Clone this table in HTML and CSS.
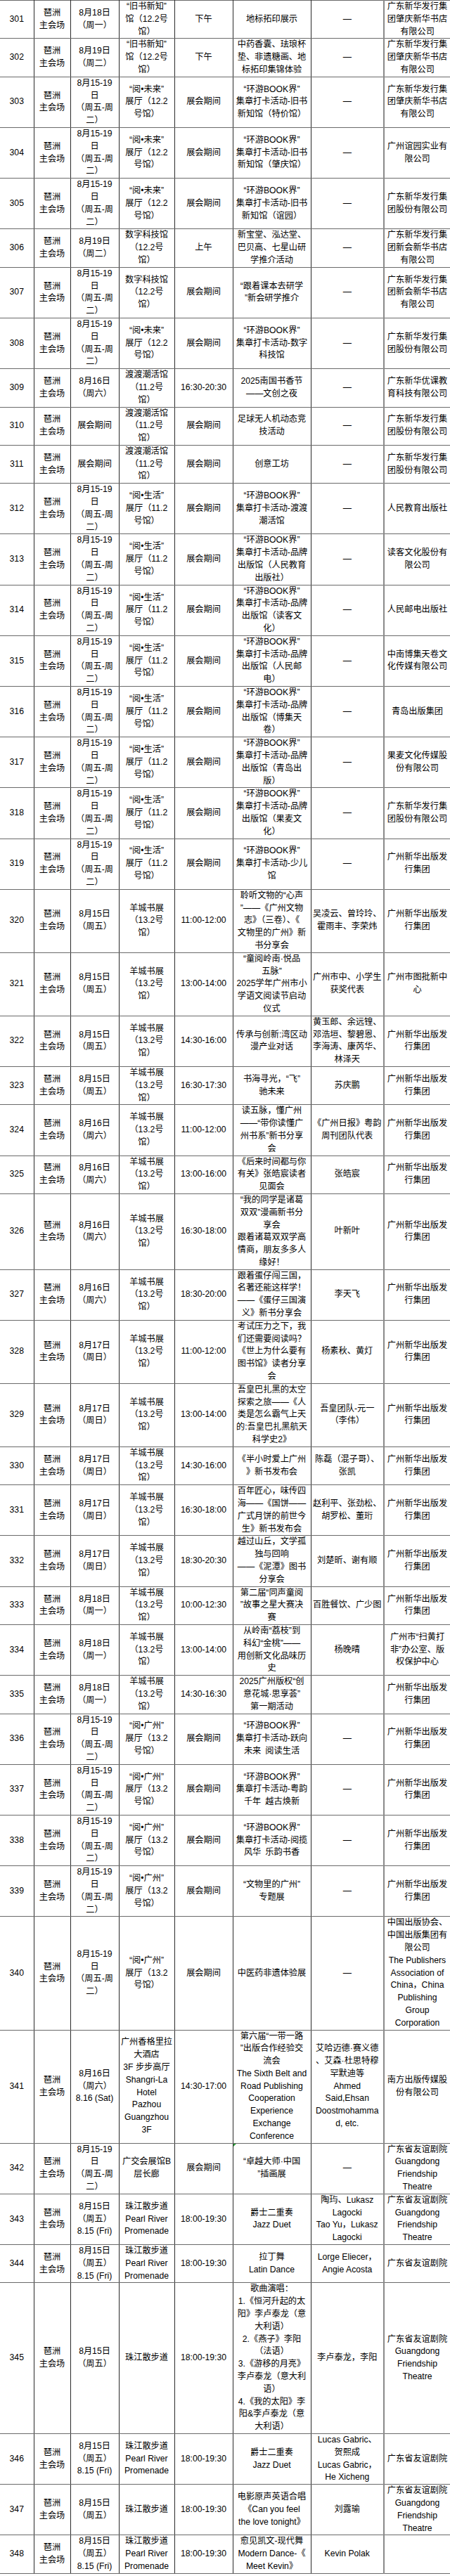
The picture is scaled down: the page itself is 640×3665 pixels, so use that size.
FILE: index.html
```html
<!DOCTYPE html>
<html lang="zh-CN">
<head>
<meta charset="utf-8">
<title>活动安排</title>
<link rel="stylesheet" href="styles.css">
</head>
<body>
<table class="sched">
<colgroup>
<col class="c-no"><col class="c-site"><col class="c-date"><col class="c-venue"><col class="c-time"><col class="c-event"><col class="c-guest"><col class="c-org">
</colgroup>
<tbody>
<tr><td>301</td><td>琶洲<br>主会场</td><td>8月18日<br>（周一）</td><td>“旧书新知”<br>馆（12.2号<br>馆）</td><td>下午</td><td>地标拓印展示</td><td>—</td><td>广东新华发行集<br>团肇庆新华书店<br>有限公司</td></tr>
<tr><td>302</td><td>琶洲<br>主会场</td><td>8月19日<br>（周二）</td><td>“旧书新知”<br>馆（12.2号<br>馆）</td><td>下午</td><td>中药香囊、珐琅杯<br>垫、非遗糖画、地<br>标拓印集锦体验</td><td>—</td><td>广东新华发行集<br>团肇庆新华书店<br>有限公司</td></tr>
<tr><td>303</td><td>琶洲<br>主会场</td><td>8月15-19<br>日<br>（周五-周<br>二）</td><td>“阅•未来”<br>展厅（12.2<br>号馆）</td><td>展会期间</td><td>“环游BOOK界”<br>集章打卡活动-旧书<br>新知馆（特价馆）</td><td>—</td><td>广东新华发行集<br>团肇庆新华书店<br>有限公司</td></tr>
<tr><td>304</td><td>琶洲<br>主会场</td><td>8月15-19<br>日<br>（周五-周<br>二）</td><td>“阅•未来”<br>展厅（12.2<br>号馆）</td><td>展会期间</td><td>“环游BOOK界”<br>集章打卡活动-旧书<br>新知馆（肇庆馆）</td><td>—</td><td>广州谊园实业有<br>限公司</td></tr>
<tr><td>305</td><td>琶洲<br>主会场</td><td>8月15-19<br>日<br>（周五-周<br>二）</td><td>“阅•未来”<br>展厅（12.2<br>号馆）</td><td>展会期间</td><td>“环游BOOK界”<br>集章打卡活动-旧书<br>新知馆（谊园）</td><td>—</td><td>广东新华发行集<br>团股份有限公司</td></tr>
<tr><td>306</td><td>琶洲<br>主会场</td><td>8月19日<br>（周二）</td><td>数字科技馆<br>（12.2号<br>馆）</td><td>上午</td><td>新宝堂、泓达堂、<br>巴贝高、七星山研<br>学推介活动</td><td>—</td><td>广东新华发行集<br>团新会新华书店<br>有限公司</td></tr>
<tr><td>307</td><td>琶洲<br>主会场</td><td>8月15-19<br>日<br>（周五-周<br>二）</td><td>数字科技馆<br>（12.2号<br>馆）</td><td>展会期间</td><td>“跟着课本去研学<br>”新会研学推介</td><td>—</td><td>广东新华发行集<br>团新会新华书店<br>有限公司</td></tr>
<tr><td>308</td><td>琶洲<br>主会场</td><td>8月15-19<br>日<br>（周五-周<br>二）</td><td>“阅•未来”<br>展厅（12.2<br>号馆）</td><td>展会期间</td><td>“环游BOOK界”<br>集章打卡活动-数字<br>科技馆</td><td>—</td><td>广东新华发行集<br>团股份有限公司</td></tr>
<tr><td>309</td><td>琶洲<br>主会场</td><td>8月16日<br>（周六）</td><td>渡渡潮活馆<br>（11.2号<br>馆）</td><td>16:30-20:30</td><td>2025南国书香节<br>——文创之夜</td><td>—</td><td>广东新华优课教<br>育科技有限公司</td></tr>
<tr><td>310</td><td>琶洲<br>主会场</td><td>展会期间</td><td>渡渡潮活馆<br>（11.2号<br>馆）</td><td>展会期间</td><td>足球无人机动态竞<br>技活动</td><td>—</td><td>广东新华发行集<br>团股份有限公司</td></tr>
<tr><td>311</td><td>琶洲<br>主会场</td><td>展会期间</td><td>渡渡潮活馆<br>（11.2号<br>馆）</td><td>展会期间</td><td>创意工坊</td><td>—</td><td>广东新华发行集<br>团股份有限公司</td></tr>
<tr><td>312</td><td>琶洲<br>主会场</td><td>8月15-19<br>日<br>（周五-周<br>二）</td><td>“阅•生活”<br>展厅（11.2<br>号馆）</td><td>展会期间</td><td>“环游BOOK界”<br>集章打卡活动-渡渡<br>潮活馆</td><td>—</td><td>人民教育出版社</td></tr>
<tr><td>313</td><td>琶洲<br>主会场</td><td>8月15-19<br>日<br>（周五-周<br>二）</td><td>“阅•生活”<br>展厅（11.2<br>号馆）</td><td>展会期间</td><td>“环游BOOK界”<br>集章打卡活动-品牌<br>出版馆（人民教育<br>出版社）</td><td>—</td><td>读客文化股份有<br>限公司</td></tr>
<tr><td>314</td><td>琶洲<br>主会场</td><td>8月15-19<br>日<br>（周五-周<br>二）</td><td>“阅•生活”<br>展厅（11.2<br>号馆）</td><td>展会期间</td><td>“环游BOOK界”<br>集章打卡活动-品牌<br>出版馆（读客文<br>化）</td><td>—</td><td>人民邮电出版社</td></tr>
<tr><td>315</td><td>琶洲<br>主会场</td><td>8月15-19<br>日<br>（周五-周<br>二）</td><td>“阅•生活”<br>展厅（11.2<br>号馆）</td><td>展会期间</td><td>“环游BOOK界”<br>集章打卡活动-品牌<br>出版馆（人民邮<br>电）</td><td>—</td><td>中南博集天卷文<br>化传媒有限公司</td></tr>
<tr><td>316</td><td>琶洲<br>主会场</td><td>8月15-19<br>日<br>（周五-周<br>二）</td><td>“阅•生活”<br>展厅（11.2<br>号馆）</td><td>展会期间</td><td>“环游BOOK界”<br>集章打卡活动-品牌<br>出版馆（博集天<br>卷）</td><td>—</td><td>青岛出版集团</td></tr>
<tr><td>317</td><td>琶洲<br>主会场</td><td>8月15-19<br>日<br>（周五-周<br>二）</td><td>“阅•生活”<br>展厅（11.2<br>号馆）</td><td>展会期间</td><td>“环游BOOK界”<br>集章打卡活动-品牌<br>出版馆（青岛出<br>版）</td><td>—</td><td>果麦文化传媒股<br>份有限公司</td></tr>
<tr><td>318</td><td>琶洲<br>主会场</td><td>8月15-19<br>日<br>（周五-周<br>二）</td><td>“阅•生活”<br>展厅（11.2<br>号馆）</td><td>展会期间</td><td>“环游BOOK界”<br>集章打卡活动-品牌<br>出版馆（果麦文<br>化）</td><td>—</td><td>广东新华发行集<br>团股份有限公司</td></tr>
<tr><td>319</td><td>琶洲<br>主会场</td><td>8月15-19<br>日<br>（周五-周<br>二）</td><td>“阅•生活”<br>展厅（11.2<br>号馆）</td><td>展会期间</td><td>“环游BOOK界”<br>集章打卡活动-少儿<br>馆</td><td>—</td><td>广州新华出版发<br>行集团</td></tr>
<tr><td>320</td><td>琶洲<br>主会场</td><td>8月15日<br>（周五）</td><td>羊城书展<br>（13.2号<br>馆）</td><td>11:00-12:00</td><td>聆听文物的“心声<br>”——《广州文物<br>志》（三卷）、《<br>文物里的广州》新<br>书分享会</td><td>吴凌云、曾玲玲、<br>霍雨丰、李荣炜</td><td>广州新华出版发<br>行集团</td></tr>
<tr><td>321</td><td>琶洲<br>主会场</td><td>8月15日<br>（周五）</td><td>羊城书展<br>（13.2号<br>馆）</td><td>13:00-14:00</td><td>“童阅岭南·悦品<br>五脉”<br>2025学年广州市小<br>学语文阅读节启动<br>仪式</td><td>广州市中、小学生<br>获奖代表</td><td>广州市图批新中<br>心</td></tr>
<tr><td>322</td><td>琶洲<br>主会场</td><td>8月15日<br>（周五）</td><td>羊城书展<br>（13.2号<br>馆）</td><td>14:30-16:00</td><td>传承与创新:湾区动<br>漫产业对话</td><td>黄玉郎、余远锽、<br>邓浩垣、黎碧恩、<br>李海涛、康芮华、<br>林泽天</td><td>广州新华出版发<br>行集团</td></tr>
<tr><td>323</td><td>琶洲<br>主会场</td><td>8月15日<br>（周五）</td><td>羊城书展<br>（13.2号<br>馆）</td><td>16:30-17:30</td><td>书海寻光，“飞”<br>驰未来</td><td>苏庆鹏</td><td>广州新华出版发<br>行集团</td></tr>
<tr><td>324</td><td>琶洲<br>主会场</td><td>8月16日<br>（周六）</td><td>羊城书展<br>（13.2号<br>馆）</td><td>11:00-12:00</td><td>读五脉，懂广州<br>——“带你读懂广<br>州书系”新书分享<br>会</td><td>《广州日报》粤韵<br>周刊团队代表</td><td>广州新华出版发<br>行集团</td></tr>
<tr><td>325</td><td>琶洲<br>主会场</td><td>8月16日<br>（周六）</td><td>羊城书展<br>（13.2号<br>馆）</td><td>13:00-16:00</td><td>《后来时间都与你<br>有关》张皓宸读者<br>见面会</td><td>张皓宸</td><td>广州新华出版发<br>行集团</td></tr>
<tr><td>326</td><td>琶洲<br>主会场</td><td>8月16日<br>（周六）</td><td>羊城书展<br>（13.2号<br>馆）</td><td>16:30-18:00</td><td>“我的同学是诸葛<br>双双”漫画新书分<br>享会<br>跟着诸葛双双学高<br>情商，朋友多多人<br>缘好！</td><td>叶新叶</td><td>广州新华出版发<br>行集团</td></tr>
<tr><td>327</td><td>琶洲<br>主会场</td><td>8月16日<br>（周六）</td><td>羊城书展<br>（13.2号<br>馆）</td><td>18:30-20:00</td><td>跟着蛋仔闯三国，<br>名著还能这样学！<br>——《蛋仔三国演<br>义》新书分享会</td><td>李天飞</td><td>广州新华出版发<br>行集团</td></tr>
<tr><td>328</td><td>琶洲<br>主会场</td><td>8月17日<br>（周日）</td><td>羊城书展<br>（13.2号<br>馆）</td><td>11:00-12:00</td><td>考试压力之下，我<br>们还需要阅读吗？<br>《世上为什么要有<br>图书馆》读者分享<br>会</td><td>杨素秋、黄灯</td><td>广州新华出版发<br>行集团</td></tr>
<tr><td>329</td><td>琶洲<br>主会场</td><td>8月17日<br>（周日）</td><td>羊城书展<br>（13.2号<br>馆）</td><td>13:00-14:00</td><td>吾皇巴扎黑的太空<br>探索之旅——《人<br>类是怎么霸气上天<br>的:吾皇巴扎黑航天<br>科学史2》</td><td>吾皇团队-元一<br>（李伟）</td><td>广州新华出版发<br>行集团</td></tr>
<tr><td>330</td><td>琶洲<br>主会场</td><td>8月17日<br>（周日）</td><td>羊城书展<br>（13.2号<br>馆）</td><td>14:30-16:00</td><td>《半小时爱上广州<br>》新书发布会</td><td>陈磊（混子哥）、<br>张凯</td><td>广州新华出版发<br>行集团</td></tr>
<tr><td>331</td><td>琶洲<br>主会场</td><td>8月17日<br>（周日）</td><td>羊城书展<br>（13.2号<br>馆）</td><td>16:30-18:00</td><td>百年匠心，味传四<br>海——《国饼——<br>广式月饼的前世今<br>生》新书发布会</td><td>赵利平、张劲松、<br>胡罗松、董珩</td><td>广州新华出版发<br>行集团</td></tr>
<tr><td>332</td><td>琶洲<br>主会场</td><td>8月17日<br>（周日）</td><td>羊城书展<br>（13.2号<br>馆）</td><td>18:30-20:30</td><td>越过山丘，文学孤<br>独与回响<br>——《泥潭》图书<br>分享会</td><td>刘楚昕、谢有顺</td><td>广州新华出版发<br>行集团</td></tr>
<tr><td>333</td><td>琶洲<br>主会场</td><td>8月18日<br>（周一）</td><td>羊城书展<br>（13.2号<br>馆）</td><td>10:00-12:30</td><td>第二届“同声童阅<br>”故事之星大赛决<br>赛</td><td>百胜餐饮、广少图</td><td>广州新华出版发<br>行集团</td></tr>
<tr><td>334</td><td>琶洲<br>主会场</td><td>8月18日<br>（周一）</td><td>羊城书展<br>（13.2号<br>馆）</td><td>13:00-14:00</td><td>从岭南“荔枝”到<br>科幻“金桃”——<br>用创新文化品味历<br>史</td><td>杨晚晴</td><td>广州市“扫黄打<br>非”办公室、版<br>权保护中心</td></tr>
<tr><td>335</td><td>琶洲<br>主会场</td><td>8月18日<br>（周一）</td><td>羊城书展<br>（13.2号<br>馆）</td><td>14:30-16:30</td><td>2025广州版权“创<br>意花城·思享荟”<br>第一期活动</td><td></td><td>广州新华出版发<br>行集团</td></tr>
<tr><td>336</td><td>琶洲<br>主会场</td><td>8月15-19<br>日<br>（周五-周<br>二）</td><td>“阅•广州”<br>展厅（13.2<br>号馆）</td><td>展会期间</td><td>“环游BOOK界”<br>集章打卡活动-跃向<br>未来&ensp;阅读生活</td><td>—</td><td>广州新华出版发<br>行集团</td></tr>
<tr><td>337</td><td>琶洲<br>主会场</td><td>8月15-19<br>日<br>（周五-周<br>二）</td><td>“阅•广州”<br>展厅（13.2<br>号馆）</td><td>展会期间</td><td>“环游BOOK界”<br>集章打卡活动-粤韵<br>千年&ensp;越古焕新</td><td>—</td><td>广州新华出版发<br>行集团</td></tr>
<tr><td>338</td><td>琶洲<br>主会场</td><td>8月15-19<br>日<br>（周五-周<br>二）</td><td>“阅•广州”<br>展厅（13.2<br>号馆）</td><td>展会期间</td><td>“环游BOOK界”<br>集章打卡活动-阅揽<br>风华&ensp;乐韵书香</td><td>—</td><td>广州新华出版发<br>行集团</td></tr>
<tr><td>339</td><td>琶洲<br>主会场</td><td>8月15-19<br>日<br>（周五-周<br>二）</td><td>“阅•广州”<br>展厅（13.2<br>号馆）</td><td>展会期间</td><td>“文物里的广州”<br>专题展</td><td>—</td><td>广州新华出版发<br>行集团</td></tr>
<tr><td>340</td><td>琶洲<br>主会场</td><td>8月15-19<br>日<br>（周五-周<br>二）</td><td>“阅•广州”<br>展厅（13.2<br>号馆）</td><td>展会期间</td><td>中医药非遗体验展</td><td>—</td><td>中国出版协会、<br>中国出版集团有<br>限公司<br>The Publishers<br>Association of<br>China，China<br>Publishing<br>Group<br>Corporation</td></tr>
<tr><td>341</td><td>琶洲<br>主会场</td><td>8月16日<br>（周六）<br>8.16 (Sat)</td><td>广州香格里拉<br>大酒店<br>3F 步步高厅<br>Shangri-La<br>Hotel<br>Pazhou<br>Guangzhou<br>3F</td><td>14:30-17:00</td><td>第六届“一带一路<br>”出版合作经验交<br>流会<br>The Sixth Belt and<br>Road Publishing<br>Cooperation<br>Experience<br>Exchange<br>Conference</td><td>艾哈迈德·赛义德<br>、艾森·杜思特穆<br>罕默迪等<br>Ahmed<br>Said,Ehsan<br>Doostmohamma<br>d, etc.</td><td>南方出版传媒股<br>份有限公司</td></tr>
<tr><td>342</td><td>琶洲<br>主会场</td><td>8月15-19<br>日<br>（周五-周<br>二）</td><td>广交会展馆B<br>层长廊</td><td>展会期间</td><td class="noted">“卓越大师·中国<br>”插画展</td><td>—</td><td>广东省友谊剧院<br>Guangdong<br>Friendship<br>Theatre</td></tr>
<tr><td>343</td><td>琶洲<br>主会场</td><td>8月15日<br>（周五）<br>8.15 (Fri)</td><td>珠江散步道<br>Pearl River<br>Promenade</td><td>18:00-19:30</td><td>爵士二重奏<br>Jazz Duet</td><td>陶玙、Lukasz<br>Lagocki<br>Tao Yu，Lukasz<br>Lagocki</td><td>广东省友谊剧院<br>Guangdong<br>Friendship<br>Theatre</td></tr>
<tr><td>344</td><td>琶洲<br>主会场</td><td>8月15日<br>（周五）<br>8.15 (Fri)</td><td>珠江散步道<br>Pearl River<br>Promenade</td><td>18:00-19:30</td><td>拉丁舞<br>Latin Dance</td><td>Lorge Eliecer，<br>Angie Acosta</td><td>广东省友谊剧院</td></tr>
<tr><td>345</td><td>琶洲<br>主会场</td><td>8月15日<br>（周五）</td><td>珠江散步道</td><td>18:00-19:30</td><td>歌曲演唱：<br>1.《恒河升起的太<br>阳》李卢泰龙（意<br>大利语）<br>2.《燕子》李阳<br>（法语）<br>3.《游移的月亮》<br>李卢泰龙（意大利<br>语）<br>4.《我的太阳》李<br>阳&amp;李卢泰龙（意<br>大利语）</td><td>李卢泰龙，李阳</td><td>广东省友谊剧院<br>Guangdong<br>Friendship<br>Theatre</td></tr>
<tr><td>346</td><td>琶洲<br>主会场</td><td>8月15日<br>（周五）<br>8.15 (Fri)</td><td>珠江散步道<br>Pearl River<br>Promenade</td><td>18:00-19:30</td><td>爵士二重奏<br>Jazz Duet</td><td>Lucas Gabric、<br>贺熙成<br>Lucas Gabric，<br>He Xicheng</td><td>广东省友谊剧院</td></tr>
<tr><td>347</td><td>琶洲<br>主会场</td><td>8月15日<br>（周五）</td><td>珠江散步道</td><td>18:00-19:30</td><td>电影原声英语合唱<br>《Can you feel<br>the love tonight》</td><td>刘露瑜</td><td>广东省友谊剧院<br>Guangdong<br>Friendship<br>Theatre</td></tr>
<tr><td>348</td><td>琶洲<br>主会场</td><td>8月15日<br>（周五）<br>8.15 (Fri)</td><td>珠江散步道<br>Pearl River<br>Promenade</td><td>18:00-19:30</td><td>愈见凯文-现代舞<br>Modern Dance-《<br>Meet Kevin》</td><td>Kevin Polak</td><td></td></tr>
</tbody>
</table>
</body>
</html>
```

FILE: styles.css
```css
html, body {
  margin: 0;
  padding: 0;
  background: #ffffff;
}

.sched {
  width: 640px;
  border-collapse: collapse;
  table-layout: fixed;
  font-family: "Liberation Sans", "Noto Sans CJK SC", sans-serif;
  font-size: 12.2px;
  line-height: 17.8px;
  color: #000000;
}

.c-no { width: 48px; }
.c-site { width: 52px; }
.c-date { width: 69px; }
.c-venue { width: 79px; }
.c-time { width: 83px; }
.c-event { width: 111px; }
.c-guest { width: 104px; }
.c-org { width: 94px; }

.sched td {
  border-top: 1px solid #6a6a6a;
  border-bottom: 1px solid #6a6a6a;
  border-left: 1px solid #2a2a2a;
  border-right: 1px solid #2a2a2a;
  padding: 0 1px;
  text-align: center;
  vertical-align: middle;
  white-space: nowrap;
  overflow: visible;
}

.sched td:first-child {
  border-left: none;
}

.sched td:last-child {
  border-right: none;
}

.sched td:nth-child(8) {
  border-left: 2px solid #8a8a8a;
}

.sched td.noted {
  position: relative;
}

.sched td.noted::before {
  content: "";
  position: absolute;
  left: 0;
  top: 0;
  border-top: 4px solid #2e9e3a;
  border-right: 4px solid transparent;
}
```
